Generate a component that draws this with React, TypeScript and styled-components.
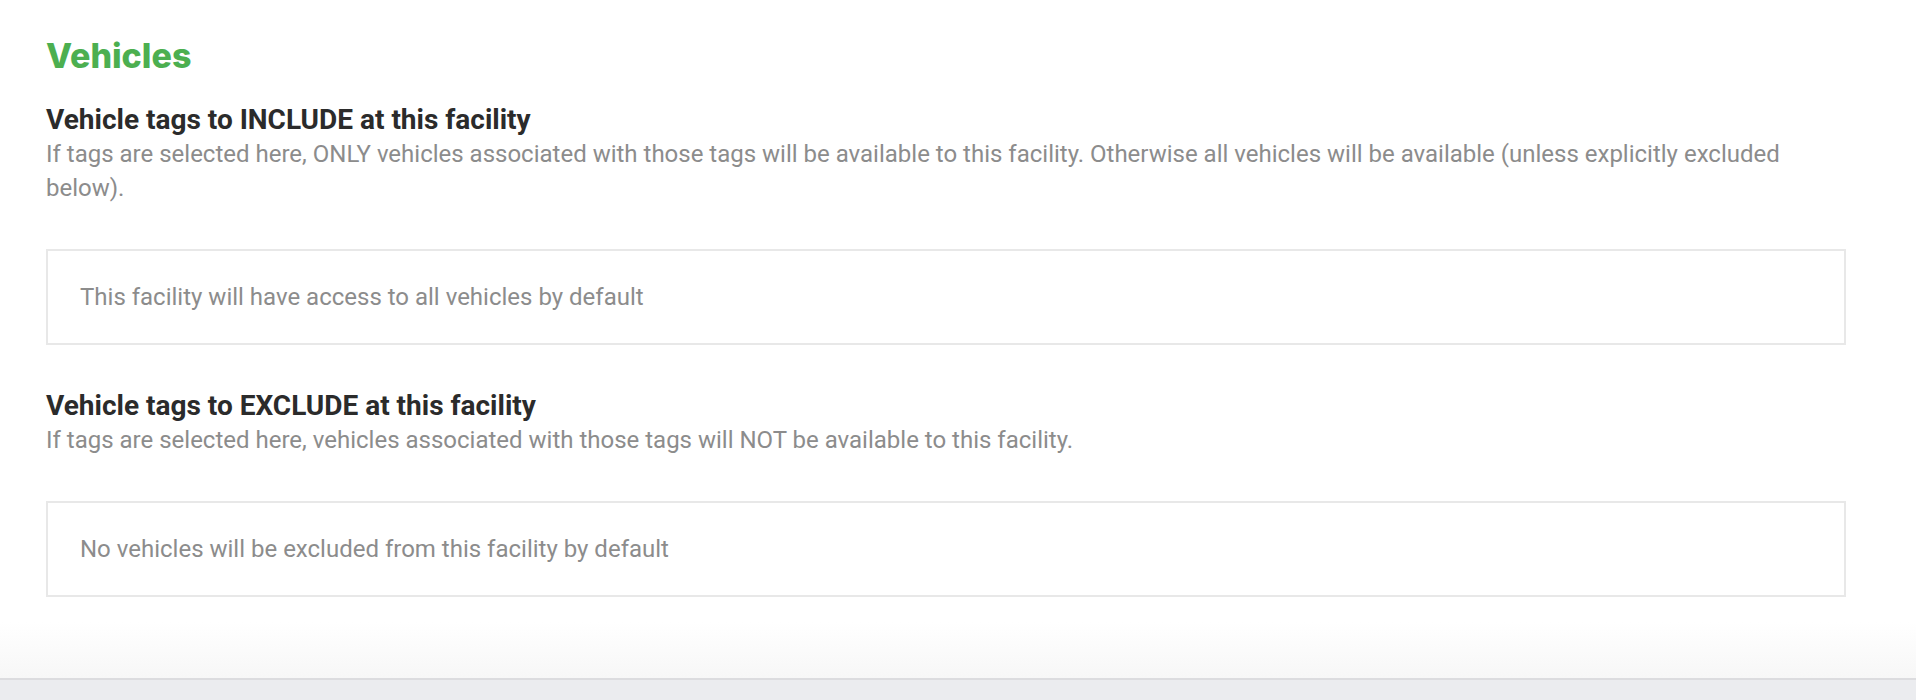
import { createGlobalStyle, styled } from "styled-components";

const GlobalStyle = createGlobalStyle`
  html, body {
    margin: 0;
    padding: 0;
    background: #ffffff;
  }
  * {
    box-sizing: border-box;
  }
`;

const Page = styled.div`
  display: flex;
  flex-direction: column;
  min-height: 700px;
  font-family: Roboto, "Liberation Sans", sans-serif;
`;

const Main = styled.main`
  flex: 1;
  padding: 36px 70px 0 46px;
  background: linear-gradient(to bottom, #ffffff calc(100% - 56px), #f7f7f7 100%);
`;

const Title = styled.h1`
  margin: 0 0 27px;
  font-family: Inter, "Noto Sans", sans-serif;
  font-weight: 800;
  font-size: 34px;
  line-height: 40px;
  color: #4caf50;
`;

const Section = styled.section`
  & + & {
    margin-top: 44px;
  }
`;

const SectionTitle = styled.h2`
  margin: 0;
  font-size: 28px;
  line-height: 34px;
  font-weight: 700;
  color: #2b2b2b;
`;

const Hint = styled.p`
  margin: 0 0 44px;
  font-size: 24px;
  line-height: 34px;
  color: #8c8c8c;
`;

const TagBox = styled.div`
  display: flex;
  align-items: center;
  height: 96px;
  padding: 0 32px;
  border: 2px solid #e8e8e8;
  background: #ffffff;
  font-size: 24px;
  color: #8c8c8c;
`;

const Footer = styled.footer`
  height: 22px;
  background: #ebecef;
  border-top: 2px solid #dcdcdf;
`;

export default function App() {
  return (
    <>
      <GlobalStyle />
      <Page>
        <Main>
          <Title>Vehicles</Title>
          <Section>
            <SectionTitle>Vehicle tags to INCLUDE at this facility</SectionTitle>
            <Hint>
              If tags are selected here, ONLY vehicles associated with those tags will be
              available to this facility. Otherwise all vehicles will be available (unless
              explicitly excluded below).
            </Hint>
            <TagBox>This facility will have access to all vehicles by default</TagBox>
          </Section>
          <Section>
            <SectionTitle>Vehicle tags to EXCLUDE at this facility</SectionTitle>
            <Hint>
              If tags are selected here, vehicles associated with those tags will NOT be
              available to this facility.
            </Hint>
            <TagBox>No vehicles will be excluded from this facility by default</TagBox>
          </Section>
        </Main>
        <Footer />
      </Page>
    </>
  );
}
